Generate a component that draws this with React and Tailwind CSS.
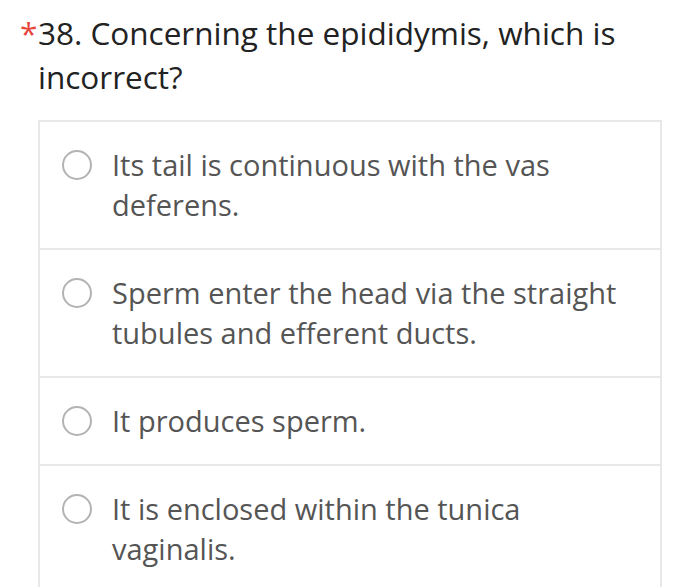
import React from 'react';

const options = [
    'Its tail is continuous with the vas deferens.',
    'Sperm enter the head via the straight tubules and efferent ducts.',
    'It produces sperm.',
    'It is enclosed within the tunica vaginalis.',
];

const Radio = () => (
    <span className="shrink-0 w-[30px] h-[30px] mt-[5px] rounded-full border-2 border-[#b3b3b3] bg-white" />
);

export default function App() {
    return (
        <div
            className="w-[700px] h-[587px] overflow-hidden bg-white"
            style={{ fontFamily: '"Open Sans", "Noto Sans", Arial, sans-serif' }}
        >
            {/* Question title */}
            <div className="flex pt-[11px] pl-[20px] pr-[20px] text-[31.5px] leading-[44px] text-[#222]">
                <span className="w-[18px] shrink-0 text-[#e8453c]">*</span>
                <h2>38. Concerning the epididymis, which is incorrect?</h2>
            </div>

            {/* Options */}
            <div className="mt-[21px] ml-[38px] w-[624px] border-2 border-b-0 border-[#e8e8e8]">
                {options.map((text, idx) => (
                    <div
                        key={idx}
                        className={`flex items-start gap-[20px] pl-[22px] pr-[24px] py-[23px] ${idx > 0 ? 'border-t-2 border-[#e8e8e8]' : ''}`}
                    >
                        <Radio />
                        <p className="text-[29px] leading-[40px] text-[#555]">{text}</p>
                    </div>
                ))}
            </div>
        </div>
    );
}
